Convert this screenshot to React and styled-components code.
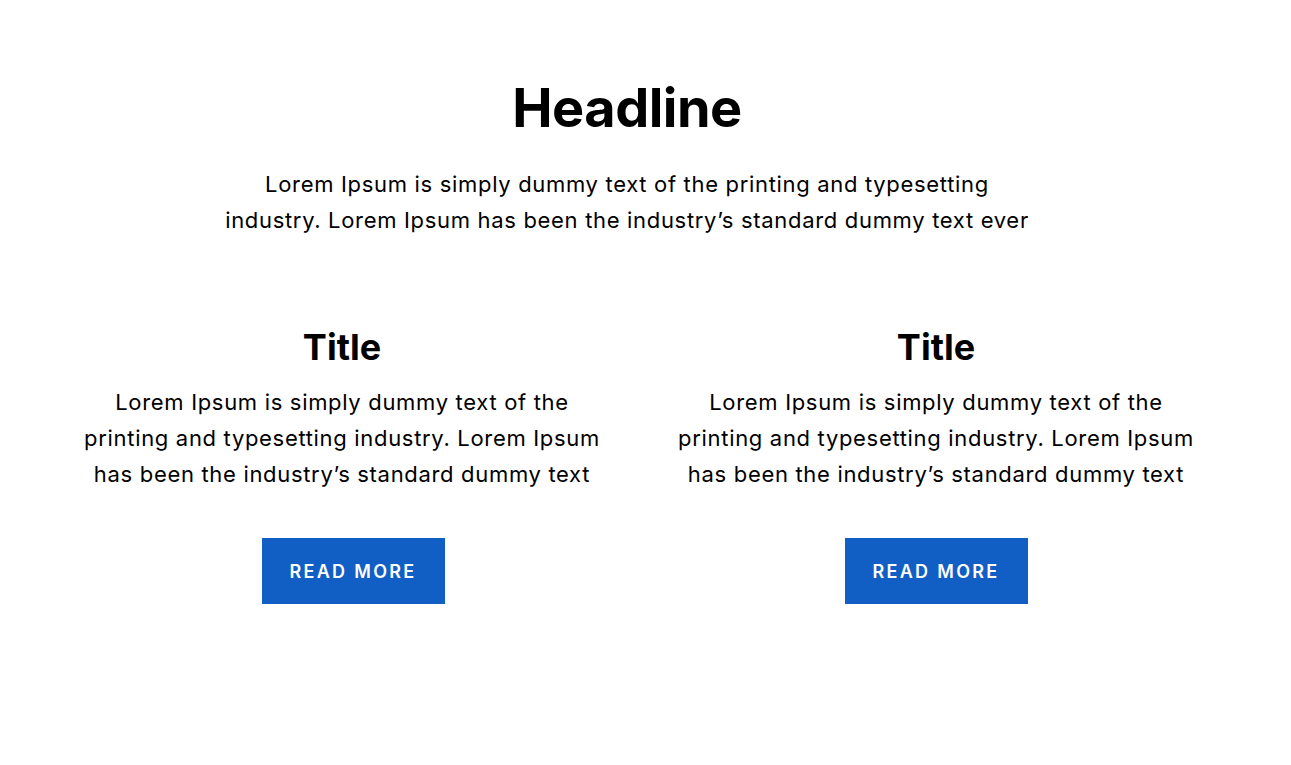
import React from "react";
import styled, { createGlobalStyle } from "styled-components";

const GlobalStyle = createGlobalStyle`
    body {
        margin: 0;
        background: #FFFFFF;
        font-family: Inter, "Noto Sans", sans-serif;
        color: #000000;
    }
`;

const Page = styled.div`
    width: 1291px;
    height: 765px;
    padding-top: 74px;
    box-sizing: border-box;
`;

const Intro = styled.header`
    display: flex;
    flex-direction: column;
    align-items: center;
    padding-right: 37px;
`;

const Headline = styled.h1`
    margin: 0;
    font-size: 54px;
    line-height: 68px;
    font-weight: 700;
    letter-spacing: -0.5px;
`;

const Lead = styled.p`
    margin: 24px 0 0;
    width: 840px;
    font-size: 22px;
    line-height: 36px;
    letter-spacing: 0.68px;
    text-align: center;
`;

const Columns = styled.section`
    display: grid;
    grid-template-columns: 594px 594px;
    padding-left: 45px;
    margin-top: 87px;
`;

const Column = styled.div`
    display: flex;
    flex-direction: column;
    align-items: center;
    text-align: center;
`;

const Title = styled.h2`
    margin: 0;
    font-size: 36px;
    line-height: 44px;
    font-weight: 700;
`;

const Body = styled.p`
    margin: 15px 0 0;
    width: 540px;
    font-size: 22px;
    line-height: 36px;
    letter-spacing: 0.68px;
`;

const ButtonRow = styled.div`
    display: flex;
    justify-content: center;
    align-self: stretch;
    padding-left: ${(p) => p.$nudge || 0}px;
    margin-top: 46px;
`;

const Button = styled.button`
    width: 183px;
    height: 66px;
    border: none;
    background: #115EC5;
    color: #FFFFFF;
    font-family: Inter, "Noto Sans", sans-serif;
    font-size: 18px;
    font-weight: 600;
    letter-spacing: 2.3px;
    cursor: pointer;
`;

const App = () => (
    <Page>
        <GlobalStyle />
        <Intro>
            <Headline>Headline</Headline>
            <Lead>
                Lorem Ipsum is simply dummy text of the printing and typesetting<br />
                industry. Lorem Ipsum has been the industry’s standard dummy text ever
            </Lead>
        </Intro>
        <Columns>
            {[22, 0].map((nudge, i) => (
                <Column key={i}>
                    <Title>Title</Title>
                    <Body>
                        Lorem Ipsum is simply dummy text of the<br />
                        printing and typesetting industry. Lorem Ipsum<br />
                        has been the industry’s standard dummy text
                    </Body>
                    <ButtonRow $nudge={nudge}>
                        <Button>READ MORE</Button>
                    </ButtonRow>
                </Column>
            ))}
        </Columns>
    </Page>
);

export default App;
